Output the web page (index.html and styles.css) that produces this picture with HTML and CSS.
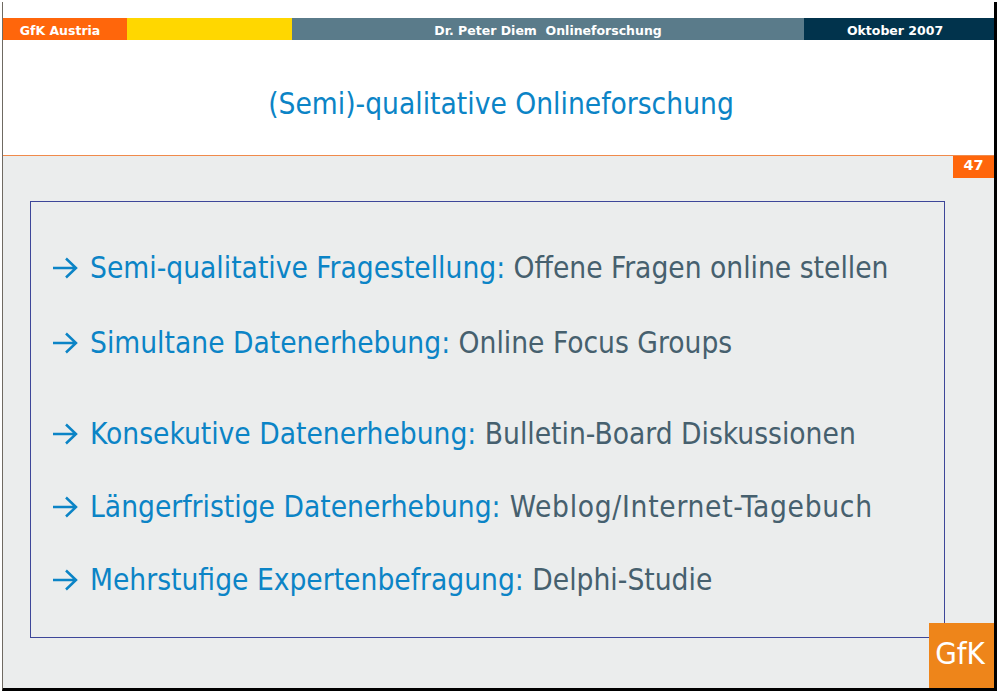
FILE: index.html
```html
<!DOCTYPE html>
<html lang="de">
<head>
<meta charset="utf-8">
<title>(Semi)-qualitative Onlineforschung</title>
<link rel="stylesheet" href="styles.css">
</head>
<body>
<div class="slide">
  <header class="bar">
    <div class="seg seg-org">GfK Austria</div>
    <div class="seg seg-yellow"></div>
    <div class="seg seg-author">Dr. Peter Diem&nbsp; Onlineforschung</div>
    <div class="seg seg-date">Oktober 2007</div>
  </header>
  <div class="title-area"><h1 class="title">(Semi)-qualitative Onlineforschung</h1></div>
  <main class="body">
    <div class="page-num">47</div>
    <section class="box">
      <p class="item"><svg class="arrow" viewBox="0 0 26 22"><path d="M1 11H24M14 1.500L24 11L14 20.500"/></svg><span class="lead">Semi-qualitative Fragestellung:</span> Offene Fragen online stellen</p>
      <p class="item item-2"><svg class="arrow" viewBox="0 0 26 22"><path d="M1 11H24M14 1.500L24 11L14 20.500"/></svg><span class="lead">Simultane Datenerhebung:</span> Online Focus Groups</p>
      <p class="item item-3"><svg class="arrow" viewBox="0 0 26 22"><path d="M1 11H24M14 1.500L24 11L14 20.500"/></svg><span class="lead">Konsekutive Datenerhebung:</span> Bulletin-Board Diskussionen</p>
      <p class="item item-4"><svg class="arrow" viewBox="0 0 26 22"><path d="M1 11H24M14 1.500L24 11L14 20.500"/></svg><span class="lead">Längerfristige Datenerhebung:</span><span class="tail-loose"> Weblog/Internet-Tagebuch</span></p>
      <p class="item item-4"><svg class="arrow" viewBox="0 0 26 22"><path d="M1 11H24M14 1.500L24 11L14 20.500"/></svg><span class="lead">Mehrstufige Expertenbefragung:</span> Delphi-Studie</p>
    </section>
    <div class="logo">GfK</div>
  </main>
</div>
</body>
</html>
```
FILE: styles.css
```css
html, body { margin: 0; padding: 0; background: #fff; }
body { width: 1000px; height: 694px; overflow: hidden; }
.slide {
  box-sizing: border-box;
  width: 995px;
  height: 689px;
  margin: 2px 0 0 2px;
  padding-top: 16px;
  border-left: 1px solid #6f6a62;
  border-right: 3px solid #000;
  border-bottom: 3px solid #000;
  display: flex;
  flex-direction: column;
  font-family: "DejaVu Sans", sans-serif;
}
.bar { display: flex; height: 22px; flex: none; color: #fff; font-weight: 700; font-size: 12.5px; line-height: 25px; }
.seg { text-align: center; white-space: nowrap; }
.seg-org { box-sizing: border-box; width: 124px; padding-right: 10px; background: #ff660b; }
.seg-yellow { width: 165px; background: #ffd700; }
.seg-author { width: 512px; background: #5a7b8a; }
.seg-date { box-sizing: border-box; flex: 1; padding-right: 8px; background: #01334c; }
.title-area { height: 115px; flex: none; padding-left: 5px; background: #fff; border-bottom: 1px solid #f08a4b; display: flex; justify-content: center; }
.title { margin: 45px 0 0; font-family: "DejaVu Sans", sans-serif; font-stretch: condensed; font-weight: 400; font-size: 29.6px; line-height: 38px; color: #0b84c6; }
.body { position: relative; flex: 1; background: #ebeded; padding: 45px 49px 0 27px; }
.page-num { position: absolute; top: 0; right: 0; width: 41px; height: 22px; background: #ff660b; color: #fff; font-weight: 700; font-size: 14.5px; line-height: 19px; text-align: center; }
.box { box-sizing: border-box; height: 437px; border: 1px solid #3d4699; padding: 46px 0 0 21px; }
.item { display: flex; align-items: center; margin: 0; height: 40px; white-space: pre; font-stretch: condensed; font-size: 29.6px; color: #46606e; }
.item-2 { margin-top: 35px; }
.item-3 { margin-top: 51px; }
.item-4 { margin-top: 33px; }
.lead { color: #0b84c6; }
.tail-loose { letter-spacing: 0.7px; }
.arrow { width: 26px; height: 22px; margin-right: 12px; flex: none; fill: none; stroke: #0b84c6; stroke-width: 2.5px; }
.logo { position: absolute; right: 0; bottom: 0; box-sizing: border-box; width: 65px; height: 65px; padding-right: 3px; background: #ee851a; color: #fff; font-stretch: condensed; font-size: 31px; line-height: 61px; text-align: center; }
```
